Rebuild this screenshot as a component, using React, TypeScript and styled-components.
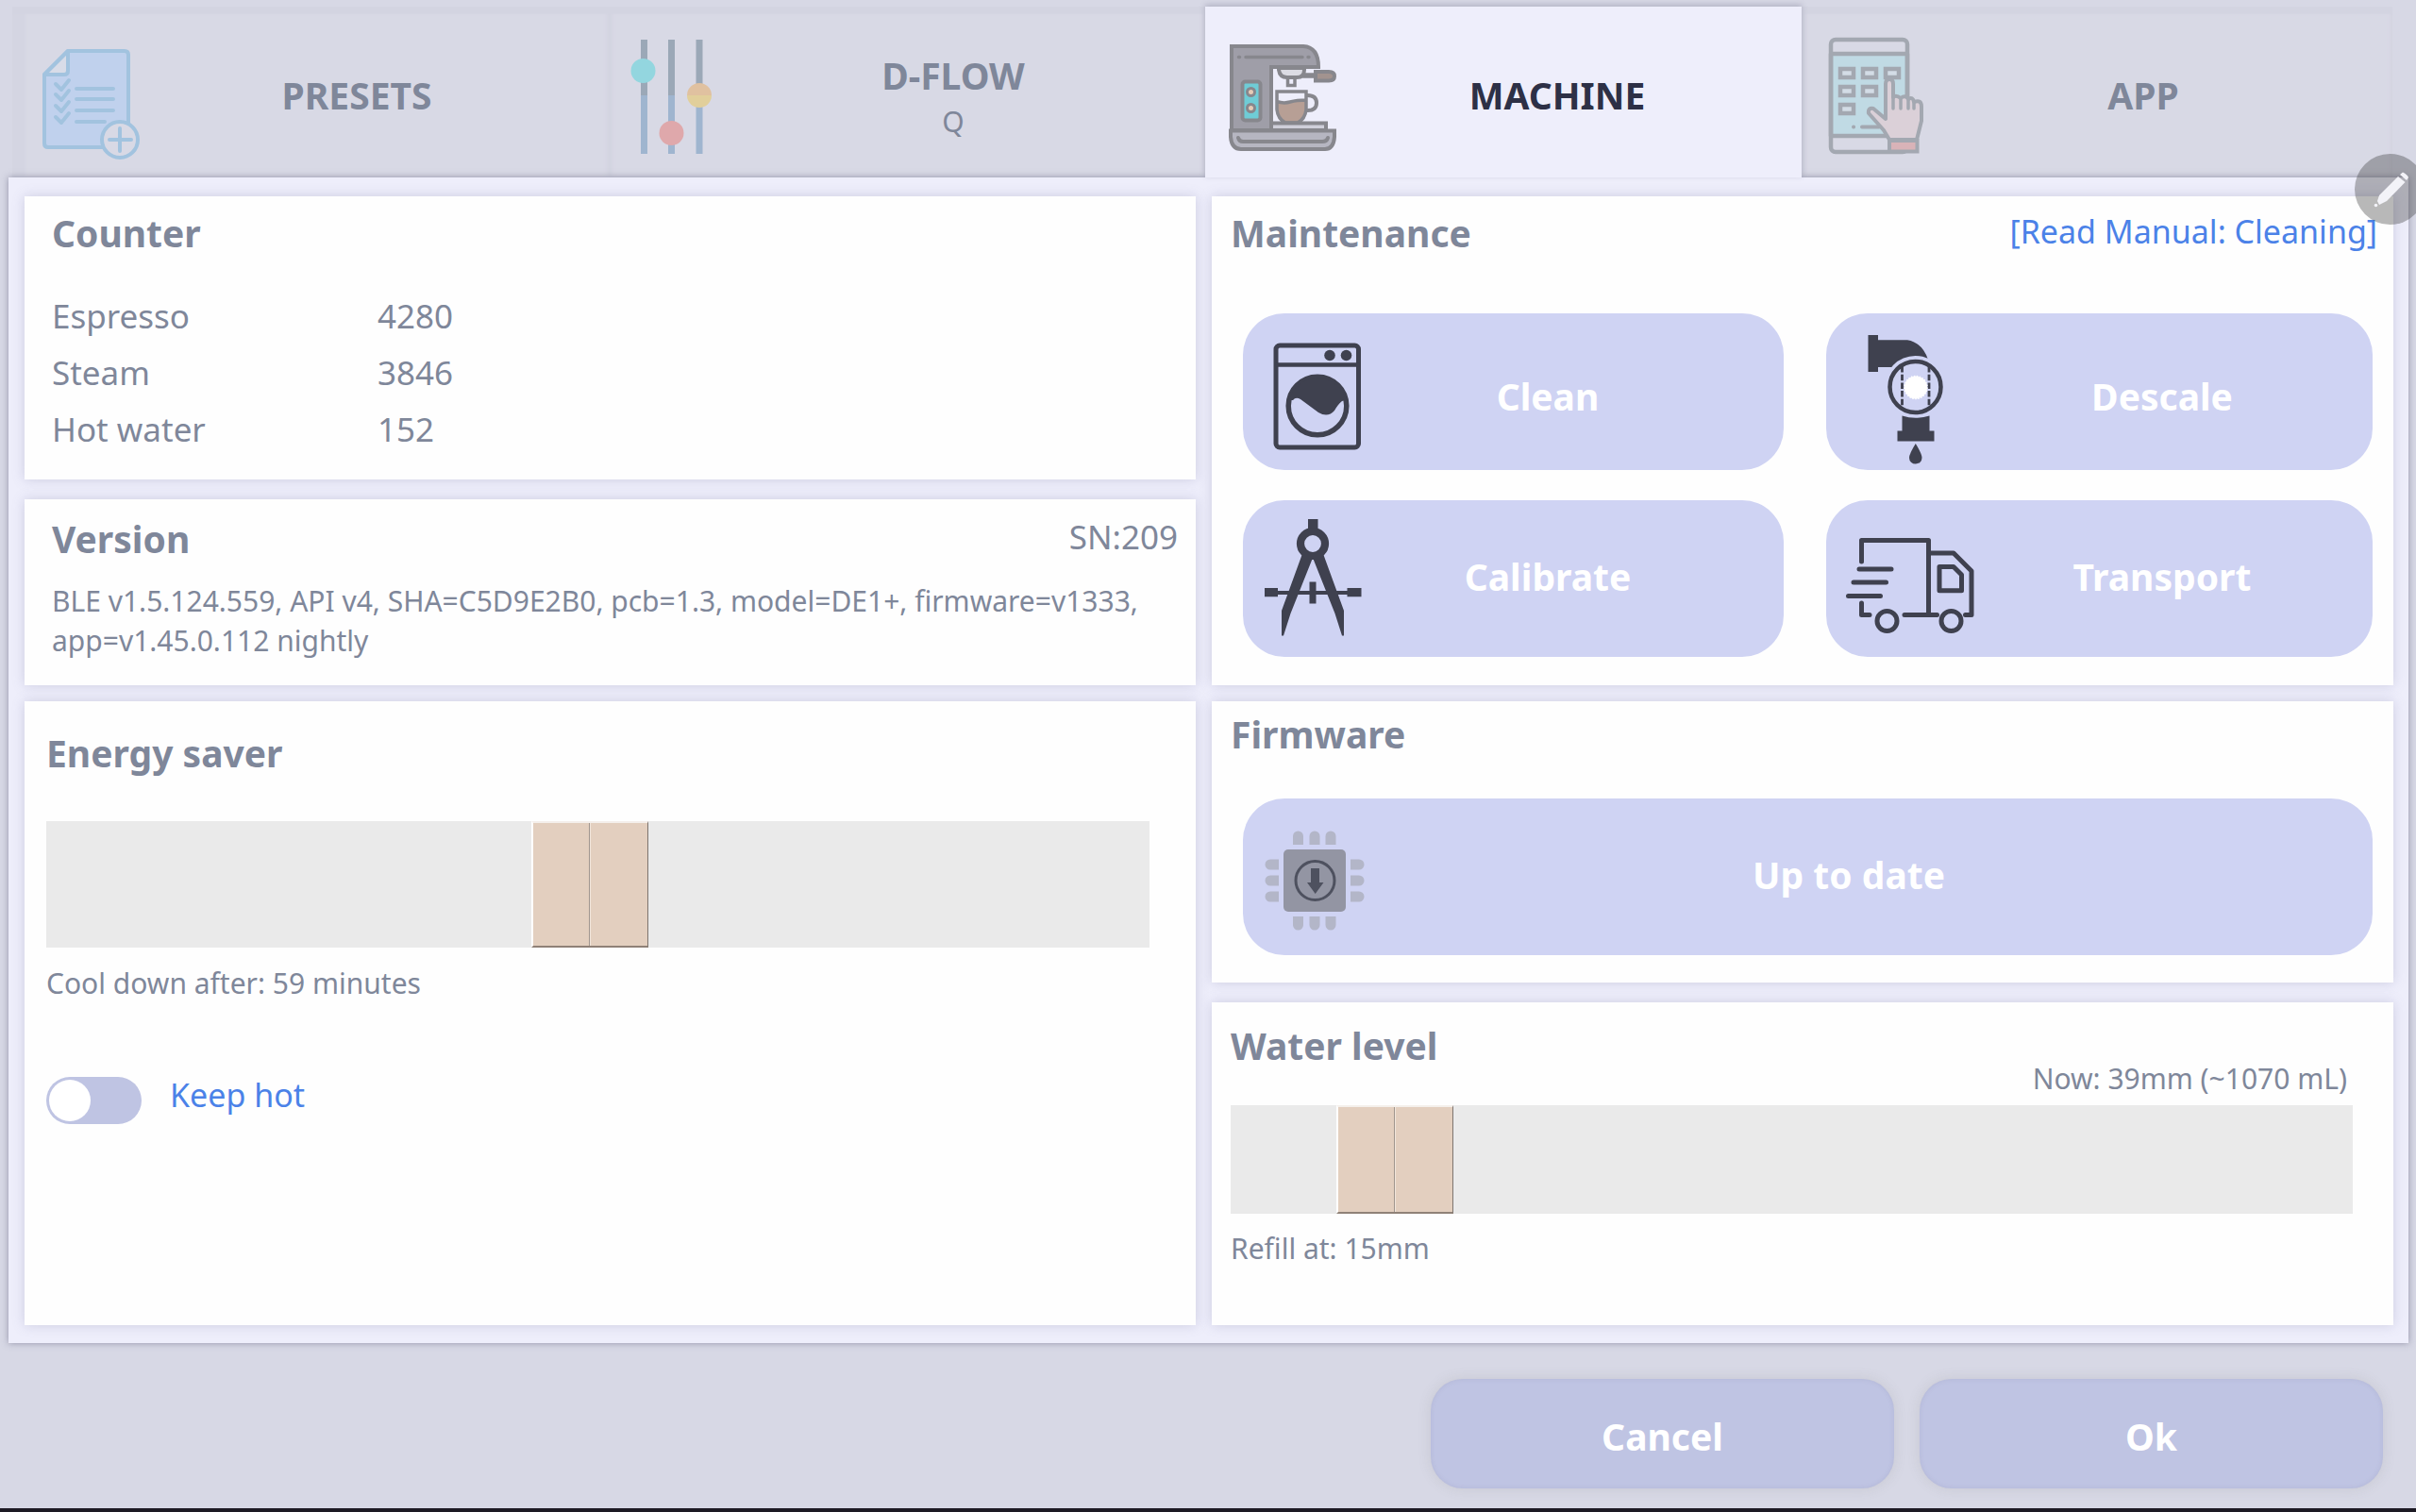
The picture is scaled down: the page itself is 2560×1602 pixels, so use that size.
import React, { useState } from "react";
import styled, { createGlobalStyle } from "styled-components";

const color = {
  page: "#d7d8e5",
  panel: "#eeeefb",
  text: "#7f879a",
  strong: "#2d3046",
  link: "#4b82e8",
  action: "#cfd3f3",
  confirm: "#bfc4e3",
  ink: "#3f414f",
};

const GlobalStyle = createGlobalStyle`
  *, *::before, *::after { box-sizing: border-box; }
  body {
    margin: 0;
    background: ${color.page};
    color: ${color.text};
    font-family: "Noto Sans", sans-serif;
    font-size: 35px;
  }
  button, input { font: inherit; }
`;

const Page = styled.div`
  position: relative;
  display: flex;
  flex-direction: column;
  min-height: 100vh;
  overflow: hidden;
  border-bottom: 4px solid #1d1a24;
`;

const Tabs = styled.nav`
  display: grid;
  grid-template-columns: 632fr 632fr 632fr 626fr;
  padding: 7px 25px 0 13px;
`;

const Tab = styled.button<{ $active?: boolean }>`
  position: relative;
  z-index: ${(p) => (p.$active ? 2 : 0)};
  display: flex;
  align-items: stretch;
  min-height: 181px;
  padding: 0 ${(p) => (p.$active ? 16 : 32)}px 0 0;
  border: 0;
  color: ${(p) => (p.$active ? color.strong : color.text)};
  background: ${(p) => (p.$active ? color.panel : "#d8d9e5")};
  box-shadow: ${(p) =>
    p.$active
      ? "0 -2px 6px rgba(90, 90, 120, 0.3)"
      : "inset 0 8px 2px #d3d4e1, inset 4px 0 4px #d3d4e1, inset -2px 0 4px #d3d4e1"};

  &:first-child {
    box-shadow: inset 0 8px 2px #d3d4e1, inset 14px 0 3px #d4d5e2, inset -2px 0 4px #d3d4e1;
  }
`;

const TabLabel = styled.span`
  flex: 1;
  display: flex;
  flex-direction: column;
  align-items: center;
  justify-content: center;
  padding-top: 6px;
  font-size: 39px;
  line-height: 56px;
  font-weight: 700;
`;

const TabNote = styled.span`
  font-size: 30px;
  line-height: 42px;
  font-weight: 400;
`;

const Panel = styled.main`
  position: relative;
  z-index: 1;
  flex: 1;
  display: grid;
  grid-template-columns: 1241fr 1252fr;
  gap: 17px;
  margin: 0 8px 0 9px;
  padding: 20px 16px 19px 17px;
  background: ${color.panel};
  box-shadow: 0 0 7px rgba(80, 80, 110, 0.5);
`;

const Column = styled.div`
  display: flex;
  flex-direction: column;
  gap: 17px;
`;

const Group = styled.div<{ $grow?: boolean }>`
  flex: ${(p) => (p.$grow ? 1 : "none")};
  display: flex;
  flex-direction: column;
  gap: 21px;
`;

const Card = styled.section<{ $pad: string; $grow?: boolean }>`
  flex: ${(p) => (p.$grow ? 1 : "none")};
  padding: ${(p) => p.$pad};
  background: #fefefe;
  box-shadow: 0 0 12px rgba(110, 110, 150, 0.26);
`;

const CardHead = styled.header`
  display: flex;
  align-items: flex-start;
  justify-content: space-between;
`;

const Title = styled.h2`
  margin: 0;
  font-size: 39px;
  line-height: 56px;
  font-weight: 700;
`;

const Serial = styled.span`
  line-height: 52px;
`;

const ManualLink = styled.a`
  padding-right: 17px;
  color: ${color.link};
  font-size: 34px;
  line-height: 52px;
  text-decoration: none;
`;

const Counters = styled.table`
  margin-top: 30px;
  border-collapse: collapse;
  line-height: 60px;

  th {
    width: 345px;
    padding: 0;
    font-weight: 400;
    text-align: left;
  }
  td { padding: 0; }
`;

const Small = styled.p<{ $top: number }>`
  margin: ${(p) => p.$top}px 0 0;
  font-size: 30px;
  line-height: 42px;
`;

const Reading = styled(Small)`
  padding-right: 6px;
`;

const Slider = styled.input<{ $height: number; $top: number }>`
  appearance: none;
  display: block;
  width: 100%;
  height: ${(p) => p.$height}px;
  margin: ${(p) => p.$top}px 0 0;
  background: #eaeaea;

  &::-webkit-slider-thumb {
    appearance: none;
    width: 124px;
    height: ${(p) => p.$height}px;
    border: solid;
    border-width: 2px 1px 2px 2px;
    border-color: #f4efeb #7d756f #8f8177 #fff;
    background: linear-gradient(90deg, transparent 59px, #a0958d 59px, #a0958d 60px, #f1e5db 60px, #f1e5db 61px, transparent 61px) #e3cfbf;
  }
`;

const ToggleRow = styled.label`
  display: flex;
  gap: 30px;
  align-items: flex-start;
  margin-top: 78px;
  color: ${color.link};
  font-size: 34px;
  line-height: 38px;
`;

const Toggle = styled.input`
  appearance: none;
  width: 101px;
  height: 50px;
  margin: 0;
  padding: 3px;
  border-radius: 25px;
  background: ${color.confirm};

  &::before {
    content: "";
    display: block;
    width: 44px;
    height: 44px;
    border-radius: 50%;
    background: #fff;
  }
  &:checked::before { margin-left: auto; }
`;

const Actions = styled.div<{ $columns: string; $top: number }>`
  display: grid;
  grid-template-columns: ${(p) => p.$columns};
  gap: 32px 45px;
  margin: ${(p) => p.$top}px 22px 0 13px;
`;

const Action = styled.button<{ $trail: number; $drop?: number }>`
  display: flex;
  align-items: stretch;
  height: 166px;
  padding: 0 ${(p) => p.$trail}px 0 0;
  border: 0;
  border-radius: 44px;
  color: #fff;
  background: ${color.action};
  font-size: 39px;
  font-weight: 700;
  line-height: 56px;

  span {
    flex: 1;
    align-self: center;
    padding-top: ${(p) => p.$drop ?? 0}px;
    padding-bottom: ${(p) => (p.$drop ? 0 : 4)}px;
  }
`;

const Glyph = styled.svg`
  flex: none;
  display: block;
  overflow: visible;
`;

const Footer = styled.footer`
  display: flex;
  justify-content: flex-end;
  gap: 27px;
  padding: 38px 35px 21px;
`;

const Confirm = styled.button`
  width: 491px;
  height: 116px;
  padding: 4px 0 0;
  border: 0;
  border-radius: 34px;
  color: #fff;
  background: ${color.confirm};
  box-shadow: 0 0 14px rgba(120, 120, 110, 0.16), inset 0 0 5px rgba(120, 120, 160, 0.18);
  font-size: 39px;
  font-weight: 700;
`;

const PenButton = styled.button`
  position: absolute;
  z-index: 3;
  top: 163px;
  right: -10px;
  width: 75px;
  height: 75px;
  padding: 0;
  border: 0;
  border-radius: 50%;
  background: rgba(50, 50, 50, 0.34);
`;

const PresetsIcon = () => (
  <Glyph width="130" height="181" fill="none" stroke="#a2c3df" strokeWidth="4" strokeLinecap="round" strokeLinejoin="round" aria-hidden>
    <path d="M59 47H119Q123 47 123 51V149H38Q34 149 34 145V72Z" fill="#c0d1ed" />
    <path d="M59 47V68Q59 72 55 72H34Z" fill="#d8dce8" />
    <path d="M68 87h39M68 98h39M68 110h39M68 122h30" />
    <path d="M46 82l6 6 8-10M46 93l6 6 8-10M46 105l6 6 8-10M46 117l6 6 8-10" />
    <circle cx="114" cy="141" r="19" fill="#d8d9e5" />
    <path d="M103 141h23M114 129v24" />
  </Glyph>
);

const FlowIcon = () => (
  <Glyph width="130" height="181" aria-hidden>
    <path d="M37.5 35v59M66.5 35v59M96 35v59" stroke="#9ba8b7" strokeWidth="7" />
    <path d="M37.5 94v62M66.5 94v62M96 94v62" stroke="#9fb5cf" strokeWidth="7" />
    <circle cx="36.500" cy="68" r="13" fill="#93d6df" />
    <circle cx="66.500" cy="134" r="13" fill="#dfa8ab" />
    <path d="M83 94a13 13 0 0 1 26 0z" fill="#e0c1a0" />
    <path d="M83 94a13 13 0 0 0 26 0z" fill="#e1cf9b" />
  </Glyph>
);

const MachineIcon = () => (
  <Glyph width="130" height="181" fill="none" stroke="#87878d" strokeWidth="4" strokeLinecap="round" aria-hidden>
    <path d="M28 42H104Q120 43 120 64H70V131H28Z" fill="#9f9ea8" />
    <path d="M35.5 53.5h1M43 53.5h60M109 53.5h1" strokeWidth="3.500" />
    <path d="M78 65V67Q79 75 87 75H97Q105 75 105 67V65Z" fill="#dcdce4" />
    <path d="M87.5 76v7.5h7.5V76M105 72h12M104 74h12" strokeWidth="3.500" />
    <path d="M117 69H131Q137 69 137 73.7T131 78.5H117Z" fill="#a2938f" />
    <path d="M76 101Q83 103 90 101T107 99V110Q106 122 97 123H86Q77 121 76 109Z" fill="#b79f95" stroke="none" />
    <path d="M76 90H107V109Q106 119 98 123H85Q77 119 76 109ZM76 100.5Q83 103 90 101T107 99" strokeWidth="3.500" />
    <path d="M108.5 94Q118 94 118 102T108.5 110" />
    <path d="M70 123.5H128V131H70Z" fill="#cfcfda" />
    <path d="M27 131.5H137V138Q136 151 127 151H38Q28 151 27 138Z" fill="#b6b6c1" />
    <path d="M35 139Q36 143 40 143H124Q129 143 130 139" />
    <rect x="39.500" y="79.500" width="19" height="41" rx="3" fill="#6fccd6" />
    <circle cx="48.500" cy="90.500" r="4" fill="#e6cbb6" strokeWidth="3" />
    <circle cx="48.500" cy="107.500" r="4" fill="#e6cbb6" strokeWidth="3" />
  </Glyph>
);

const AppIcon = () => (
  <Glyph width="130" height="181" fill="none" stroke="#a3a8b1" strokeWidth="4.500" strokeLinejoin="round" strokeLinecap="round" aria-hidden>
    <path d="M31 50H112V137H31Z" fill="#c0dae4" />
    <rect x="31" y="35" width="81" height="119" rx="5" />
    <path d="M41 66h14v9h-14zM65 66h14v9h-14zM89 66h14v9h-14zM41 85h14v9h-14zM65 85h14v9h-14zM41 104h14v9h-14z" fill="#d3dce6" strokeLinejoin="miter" />
    <path d="M55 127.5h.1M64 127.5h18" strokeWidth="4" />
    <path
      d="M89 119V82Q89 77 93 77T97 82V96Q100 93 105 97Q110 93 113 98Q118 95 119 101Q127 98 127 106V121L122 141H93L87 131L71 113Q70 107 76 108Z"
      fill="#dbd0d8"
      strokeWidth="4"
    />
    <path d="M97 94v14M105 98v10M113 99v9M119 101v7" strokeWidth="3.500" />
    <rect x="93" y="142" width="29.500" height="11.500" fill="#d9b3b8" strokeLinejoin="miter" strokeWidth="4" />
  </Glyph>
);

const WasherIcon = () => (
  <Glyph width="160" height="166" fill="none" stroke={color.ink} strokeWidth="5" aria-hidden>
    <rect x="35" y="34" width="87.500" height="108" rx="4" />
    <path d="M35 54.5H123" strokeWidth="4.500" />
    <circle cx="92" cy="44.500" r="5.800" fill={color.ink} stroke="none" />
    <circle cx="109.500" cy="44.500" r="5.800" fill={color.ink} stroke="none" />
    <circle cx="79" cy="98" r="30.800" strokeWidth="5.500" />
    <path d="M49 92H53Q56 88 61 91L80 105Q90 111 97 103Q101 96 105 93L109 92A31 31 0 0 0 49 92Z" fill={color.ink} stroke="none" />
  </Glyph>
);

const CompassIcon = () => (
  <Glyph width="160" height="166" fill={color.ink} aria-hidden>
    <path d="M69 20h10.5v14h-10.5z" />
    <circle cx="74" cy="46" r="13" fill="none" stroke={color.ink} strokeWidth="8.200" />
    <path d="M62.5 58L41 117V143.5H43L50.5 120L73.2 63L74.8 63L97.5 120L105 143.5H107V117L85.5 58Z" />
    <path d="M36 96h75v4h-75zM23 93h14v9.3h-14zM110.5 93h15v9.3h-15zM70.5 86.5h7v23h-7z" />
  </Glyph>
);

const PipeIcon = () => (
  <Glyph width="160" height="166" fill={color.ink} aria-hidden>
    <path d="M44.5 23h10.5v5.3H86Q102 31 108 49V57H55V62H44.5Z" />
    <circle cx="94.500" cy="78" r="33" fill={color.action} />
    <circle cx="94.500" cy="78" r="27" fill="none" stroke={color.ink} strokeWidth="4.500" />
    <path d="M80.5 56V101M109 56V101" stroke={color.ink} strokeWidth="2.800" strokeDasharray="6.500 2.200" />
    <circle cx="95" cy="78.500" r="11" fill="#fff" stroke="#fff" strokeWidth="2" />
    <circle cx="95" cy="78.500" r="12" fill="none" stroke="#fff" strokeWidth="1.500" strokeDasharray="1.500 1.500" />
    <path d="M80.5 108.5Q94.5 113 109.5 108.5V124.5H114.5V135.5H75.5V124.5H80.5Z" />
    <path d="M94.8 138Q101.5 149 101.5 153A6.7 6.5 0 0 1 88 153Q88 149 94.8 138Z" />
  </Glyph>
);

const TruckIcon = () => (
  <Glyph width="160" height="166" fill="none" stroke={color.ink} strokeWidth="5" strokeLinecap="round" strokeLinejoin="round" aria-hidden>
    <path d="M37.5 65V42.5H108.5V121" />
    <path d="M37.5 109V121.5H46M83 121.5H117.5M147.5 121.5H154V75L135 56H110" />
    <path d="M120 70.5H135L143.5 79V95.7H120Z" />
    <path d="M35 73H69M29 87H63.5M23.5 101.5H57.5" />
    <circle cx="64.500" cy="128" r="10.500" />
    <circle cx="132.500" cy="128" r="10.500" />
  </Glyph>
);

const ChipIcon = () => (
  <Glyph width="160" height="166" fill="#b3b6c8" aria-hidden>
    {[58.5, 76, 93].map((x) => (
      <g key={x}>
        <path d={`M${x - 5.5} 49V40a5.5 5.5 0 0 1 11 0V49z`} />
        <path d={`M${x - 5.5} 125V134a5.5 5.5 0 0 0 11 0V125z`} />
      </g>
    ))}
    {[70, 87, 104].map((y) => (
      <g key={y}>
        <path d={`M38 ${y - 5.5}H29a5.5 5.5 0 0 0 0 11H38z`} />
        <path d={`M114 ${y - 5.5}H123a5.5 5.5 0 0 1 0 11H114z`} />
      </g>
    ))}
    <rect x="43" y="54" width="66" height="66" rx="5" fill="#9395a3" />
    <circle cx="76.500" cy="87" r="20.500" fill="none" stroke="#4e515f" strokeWidth="3" />
    <path d="M72 74H81V89H85.5L76.7 101L68 89H72Z" fill="#4e515f" />
  </Glyph>
);

const PenIcon = () => (
  <Glyph width="75" height="75" fill="#f3f3f8" aria-hidden>
    <path d="M46 24L53.5 30L34 50L26 54L24 50L26 44Z" />
    <path d="M48 22L51 19.5Q56 22 57 25L55 28Z" />
    <circle cx="22.500" cy="54.500" r="1.800" />
  </Glyph>
);

const counters: [string, number][] = [
  ["Espresso", 4280],
  ["Steam", 3846],
  ["Hot water", 152],
];

export default function App() {
  const [coolDown, setCoolDown] = useState(59);
  const [refill, setRefill] = useState(15);
  const [keepHot, setKeepHot] = useState(false);

  return (
    <>
      <GlobalStyle />
      <Page>
        <Tabs>
          <Tab type="button">
            <PresetsIcon />
            <TabLabel>PRESETS</TabLabel>
          </Tab>
          <Tab type="button">
            <FlowIcon />
            <TabLabel>
              D-FLOW
              <TabNote>Q</TabNote>
            </TabLabel>
          </Tab>
          <Tab type="button" $active aria-current="page">
            <MachineIcon />
            <TabLabel>MACHINE</TabLabel>
          </Tab>
          <Tab type="button">
            <AppIcon />
            <TabLabel>APP</TabLabel>
          </Tab>
        </Tabs>

        <Panel>
          <Column>
            <Group>
              <Card $pad="11px 19px 23px 29px">
                <Title>Counter</Title>
                <Counters>
                  <tbody>
                    {counters.map(([name, count]) => (
                      <tr key={name}>
                        <th scope="row">{name}</th>
                        <td>{count}</td>
                      </tr>
                    ))}
                  </tbody>
                </Counters>
              </Card>
              <Card $pad="14px 19px 26px 29px">
                <CardHead>
                  <Title>Version</Title>
                  <Serial>SN:209</Serial>
                </CardHead>
                <Small $top={17}>
                  BLE v1.5.124.559, API v4, SHA=C5D9E2B0, pcb=1.3, model=DE1+, firmware=v1333, app=v1.45.0.112 nightly
                </Small>
              </Card>
            </Group>
            <Card $grow $pad="27px 49px 24px 23px">
              <Title id="energy-title">Energy saver</Title>
              <Slider
                type="range"
                min={0}
                max={120}
                value={coolDown}
                aria-labelledby="energy-title"
                onChange={(e) => setCoolDown(Number(e.target.value))}
                $height={134}
                $top={44}
              />
              <Small $top={17}>Cool down after: {coolDown} minutes</Small>
              <ToggleRow>
                <Toggle type="checkbox" role="switch" checked={keepHot} onChange={(e) => setKeepHot(e.target.checked)} />
                Keep hot
              </ToggleRow>
            </Card>
          </Column>

          <Column>
            <Card $pad="11px 0 30px 20px">
              <CardHead>
                <Title>Maintenance</Title>
                <ManualLink href="#cleaning">[Read Manual: Cleaning]</ManualLink>
              </CardHead>
              <Actions $columns="573fr 579fr" $top={57}>
                <Action type="button" $trail={87} $drop={10}>
                  <WasherIcon />
                  <span>Clean</span>
                </Action>
                <Action type="button" $trail={27} $drop={10}>
                  <PipeIcon />
                  <span>Descale</span>
                </Action>
                <Action type="button" $trail={87}>
                  <CompassIcon />
                  <span>Calibrate</span>
                </Action>
                <Action type="button" $trail={27}>
                  <TruckIcon />
                  <span>Transport</span>
                </Action>
              </Actions>
            </Card>
            <Group $grow>
              <Card $pad="7px 0 29px 20px">
                <Title>Firmware</Title>
                <Actions $columns="1fr" $top={40}>
                  <Action type="button" $trail={73}>
                    <ChipIcon />
                    <span>Up to date</span>
                  </Action>
                </Actions>
              </Card>
              <Card $grow $pad="18px 43px 24px 20px">
                <CardHead>
                  <Title id="water-title">Water level</Title>
                  <Reading $top={42}>Now: 39mm (~1070 mL)</Reading>
                </CardHead>
                <Slider
                  type="range"
                  min={5}
                  max={100}
                  value={refill}
                  aria-labelledby="water-title"
                  onChange={(e) => setRefill(Number(e.target.value))}
                  $height={115}
                  $top={7}
                />
                <Small $top={16}>Refill at: {refill}mm</Small>
              </Card>
            </Group>
          </Column>
        </Panel>

        <Footer>
          <Confirm type="button">Cancel</Confirm>
          <Confirm type="button">Ok</Confirm>
        </Footer>

        <PenButton type="button" aria-label="Edit">
          <PenIcon />
        </PenButton>
      </Page>
    </>
  );
}
